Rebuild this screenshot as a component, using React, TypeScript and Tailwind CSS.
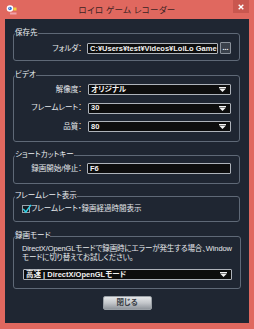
import React from "react";

const Arrow = () => (
  <svg width="7" height="5" viewBox="0 0 7 5" className="shrink-0">
    <rect x="0" y="0" width="7" height="1" fill="#f2f2f2" />
    <polygon points="0,1.6 7,1.6 3.5,5" fill="#f2f2f2" />
  </svg>
);

const Select = ({ value, className = "" }: { value: string; className?: string }) => (
  <div
    className={`h-[11px] border border-[#aeb3ba] rounded-[1px] bg-[#0d0d0d] flex items-center justify-between pl-[2px] pr-[4px] text-[#f2f2f2] font-bold text-[7.5px] leading-none ${className}`}
  >
    <span>{value}</span>
    <Arrow />
  </div>
);

const Input = ({ value, className = "" }: { value: string; className?: string }) => (
  <div
    className={`h-[11px] border border-[#aeb3ba] rounded-[1px] bg-[#0d0d0d] flex items-center pl-[2px] text-[#f2f2f2] font-bold text-[7.5px] leading-none overflow-hidden whitespace-nowrap ${className}`}
  >
    {value}
  </div>
);

const Group = ({
  title,
  children,
  className = "",
}: {
  title: string;
  children: React.ReactNode;
  className?: string;
}) => (
  <fieldset className={`border border-[#5f6977] rounded-[3px] p-0 m-0 ${className}`}>
    <legend className="ml-[1px] p-0 text-[7.5px] leading-[8px] text-[#eceff2]">{title}</legend>
    {children}
  </fieldset>
);

const Row = ({ label, children }: { label: string; children: React.ReactNode }) => (
  <div className="flex items-center">
    <div className="w-[69px] shrink-0 text-right text-[7.5px] leading-none text-[#e6e9ec] pr-[1px]">{label}</div>
    <div className="ml-[4px] flex-1 flex gap-[2px]">{children}</div>
  </div>
);

export default function App() {
  return (
    <div className="w-[254px] h-[329px] bg-[#e0685f] flex flex-col font-['Liberation_Sans','Noto_Sans_CJK_JP',sans-serif] [font-feature-settings:'palt'] select-none">
      {/* title bar */}
      <div className="h-[19px] shrink-0 grid grid-cols-[1fr_auto_1fr] items-start">
        <div className="pl-[6px] pt-[5px]">
          <svg width="11" height="10" viewBox="0 0 11 10">
            <circle cx="4" cy="3.5" r="3.3" fill="#ffffff" />
            <circle cx="4" cy="3.5" r="1.8" fill="#2f6fd6" />
            <circle cx="3.6" cy="3.1" r="0.6" fill="#ffffff" />
            <rect x="7.5" y="2.5" width="3" height="3" fill="#f4d23c" />
            <rect x="4" y="7.5" width="6.5" height="2" fill="#f1a0a8" />
          </svg>
        </div>
        <div className="pt-[5px] text-[8.5px] leading-[10px] text-[#3d2323] tracking-[0.3px] whitespace-nowrap">
          ロイロ ゲーム レコーダー
        </div>
        <div className="flex justify-end pr-[5px]">
          <div className="w-[16px] h-[13px] bg-[#c9574f] flex items-center justify-center">
            <svg width="6" height="6" viewBox="0 0 6 6">
              <path d="M0.7 0.7 L5.3 5.3 M5.3 0.7 L0.7 5.3" stroke="#ffffff" strokeWidth="1.4" />
            </svg>
          </div>
        </div>
      </div>

      {/* content */}
      <div className="mx-[5px] mb-[6px] flex-1 bg-[#1f2632] flex flex-col pl-[8px] pr-[9px]">
        <Group title="保存先" className="mt-[10px]">
          <div className="pt-[6px] pb-[6px] pr-[8px]">
            <Row label="フォルダ：">
              <Input value="C:¥Users¥test¥Videos¥LoiLo Game" className="flex-1" />
              <div className="w-[11px] h-[12px] -mt-[1px] border border-[#8b929b] rounded-[1px] bg-[#3a414b] flex items-end justify-center pb-[2px] text-[7px] leading-none text-white font-bold">
                ...
              </div>
            </Row>
          </div>
        </Group>

        <Group title="ビデオ" className="mt-[10px]">
          <div className="pt-[5px] pb-[9px] pr-[8px] flex flex-col gap-[7.5px]">
            <Row label="解像度：">
              <Select value="オリジナル" className="flex-1 ml-[1px]" />
            </Row>
            <Row label="フレームレート：">
              <Select value="30" className="flex-1 ml-[1px]" />
            </Row>
            <Row label="品質：">
              <Select value="80" className="flex-1 ml-[1px]" />
            </Row>
          </div>
        </Group>

        <Group title="ショートカットキー" className="mt-[9px]">
          <div className="pt-[4px] pb-[9px] pr-[8px]">
            <Row label="録画開始/停止：">
              <Input value="F6" className="flex-1" />
            </Row>
          </div>
        </Group>

        <Group title="フレームレート表示" className="mt-[8px]">
          <div className="pt-[5px] pb-[8px] pl-[8px] flex items-center">
            <div className="relative w-[8px] h-[8px] border border-[#9aa1aa] bg-[#151a20] shrink-0">
              <svg width="10" height="10" viewBox="0 0 10 10" className="absolute left-[-1px] top-[-2px]">
                <path d="M1.2 5 L3.8 8 L9 0.8" stroke="#2fd2e8" strokeWidth="1.4" fill="none" />
              </svg>
            </div>
            <span className="ml-[1px] text-[7.5px] leading-none text-[#e6e9ec] whitespace-nowrap">
              フレームレート・録画経過時間表示
            </span>
          </div>
        </Group>

        <Group title="録画モード" className="mt-[10px]">
          <div className="pt-[4px] pb-[8px] pl-[8px] pr-[8px]">
            <div className="text-[7.5px] leading-[9px] text-[#e6e9ec] tracking-[-0.12px]">
              <div className="whitespace-nowrap">DirectX/OpenGLモードで録画時にエラーが発生する場合、Window</div>
              <div className="whitespace-nowrap">モードに切り替えてお試しください。</div>
            </div>
            <Select value="高速 | DirectX/OpenGLモード" className="mt-[7px] ml-[1px]" />
          </div>
        </Group>

        <div className="mt-[7px] flex justify-center pl-[1px]">
          <div className="w-[49px] h-[14px] rounded-[2px] border border-[#9aa0a6] bg-gradient-to-b from-[#e4e6e8] via-[#c3c6ca] to-[#8f959c] flex items-center justify-center text-[7.5px] leading-none text-[#3a3f46] font-bold">
            閉じる
          </div>
        </div>
      </div>
    </div>
  );
}
